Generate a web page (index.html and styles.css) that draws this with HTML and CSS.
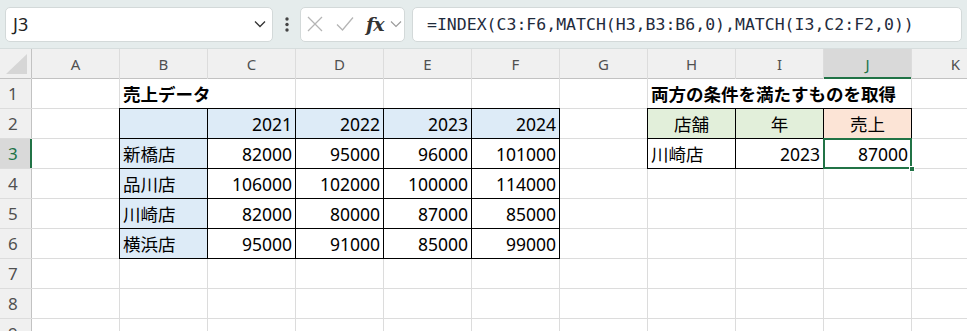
FILE: index.html
```html
<!DOCTYPE html>
<html lang="ja">
<head>
  <meta charset="UTF-8">
  <title>INDEX MATCH</title>
  <link rel="stylesheet" href="styles.css">
</head>
<body>
  <div class="toolbar">
    <div class="namebox">
      <span>J3</span>
      <svg width="12" height="8" viewBox="0 0 12 8"><polyline points="1,1.5 6,6.5 11,1.5" fill="none" stroke="#333" stroke-width="1.3"/></svg>
    </div>
    <div class="dots">
      <svg width="4" height="15" viewBox="0 0 4 15"><circle cx="2" cy="2" r="1.7" fill="#444"/><circle cx="2" cy="7.5" r="1.7" fill="#444"/><circle cx="2" cy="13" r="1.7" fill="#444"/></svg>
    </div>
    <div class="fxbox">
      <svg class="ic-x" width="16" height="16" viewBox="0 0 16 16"><path d="M1 1 L15 15 M15 1 L1 15" stroke="#b5b5b5" stroke-width="1.3" fill="none"/></svg>
      <svg class="ic-ok" width="18" height="16" viewBox="0 0 18 16"><polyline points="1,8.5 6.5,14 17,1.5" stroke="#b5b5b5" stroke-width="1.3" fill="none"/></svg>
      <span class="fx">fx</span>
      <svg class="ic-dd" width="12" height="8" viewBox="0 0 12 8"><polyline points="1,1.5 6,6.5 11,1.5" fill="none" stroke="#999" stroke-width="1.1"/></svg>
    </div>
    <div class="formula">=INDEX(C3:F6,MATCH(H3,B3:B6,0),MATCH(I3,C2:F2,0))</div>
  </div>

  <div class="sheet">
    <!-- column headers -->
    <div class="corner"><svg width="24" height="22" viewBox="0 0 24 22"><polygon points="23,1 23,21 2,21" fill="#d6d6d6"/></svg></div>
    <div class="colhead">A</div>
    <div class="colhead">B</div>
    <div class="colhead">C</div>
    <div class="colhead">D</div>
    <div class="colhead">E</div>
    <div class="colhead">F</div>
    <div class="colhead">G</div>
    <div class="colhead">H</div>
    <div class="colhead">I</div>
    <div class="colhead sel">J</div>
    <div class="colhead">K</div>

    <!-- row 1 -->
    <div class="rowhead">1</div>
    <div class="cell"></div>
    <div class="cell title span2">売上データ</div>
    <div class="cell"></div>
    <div class="cell"></div>
    <div class="cell"></div>
    <div class="cell"></div>
    <div class="cell title span3">両方の条件を満たすものを取得</div>
    <div class="cell"></div>

    <!-- row 2 -->
    <div class="rowhead">2</div>
    <div class="cell"></div>
    <div class="cell bd blue"></div>
    <div class="cell bd blue r">2021</div>
    <div class="cell bd blue r">2022</div>
    <div class="cell bd blue r">2023</div>
    <div class="cell bd blue r">2024</div>
    <div class="cell"></div>
    <div class="cell bd green c">店舗</div>
    <div class="cell bd green c">年</div>
    <div class="cell bd orange c">売上</div>
    <div class="cell"></div>

    <!-- row 3 -->
    <div class="rowhead sel">3</div>
    <div class="cell"></div>
    <div class="cell bd blue">新橋店</div>
    <div class="cell bd r">82000</div>
    <div class="cell bd r">95000</div>
    <div class="cell bd r">96000</div>
    <div class="cell bd r">101000</div>
    <div class="cell"></div>
    <div class="cell bd">川崎店</div>
    <div class="cell bd r">2023</div>
    <div class="cell bd r active">87000<span class="handle"></span></div>
    <div class="cell"></div>

    <!-- row 4 -->
    <div class="rowhead">4</div>
    <div class="cell"></div>
    <div class="cell bd blue">品川店</div>
    <div class="cell bd r">106000</div>
    <div class="cell bd r">102000</div>
    <div class="cell bd r">100000</div>
    <div class="cell bd r">114000</div>
    <div class="cell"></div>
    <div class="cell"></div>
    <div class="cell"></div>
    <div class="cell"></div>
    <div class="cell"></div>

    <!-- row 5 -->
    <div class="rowhead">5</div>
    <div class="cell"></div>
    <div class="cell bd blue">川崎店</div>
    <div class="cell bd r">82000</div>
    <div class="cell bd r">80000</div>
    <div class="cell bd r">87000</div>
    <div class="cell bd r">85000</div>
    <div class="cell"></div>
    <div class="cell"></div>
    <div class="cell"></div>
    <div class="cell"></div>
    <div class="cell"></div>

    <!-- row 6 -->
    <div class="rowhead">6</div>
    <div class="cell"></div>
    <div class="cell bd blue">横浜店</div>
    <div class="cell bd r">95000</div>
    <div class="cell bd r">91000</div>
    <div class="cell bd r">85000</div>
    <div class="cell bd r">99000</div>
    <div class="cell"></div>
    <div class="cell"></div>
    <div class="cell"></div>
    <div class="cell"></div>
    <div class="cell"></div>

    <!-- rows 7-9 -->
    <div class="rowhead">7</div>
    <div class="cell"></div><div class="cell"></div><div class="cell"></div><div class="cell"></div><div class="cell"></div><div class="cell"></div><div class="cell"></div><div class="cell"></div><div class="cell"></div><div class="cell"></div><div class="cell"></div>
    <div class="rowhead">8</div>
    <div class="cell"></div><div class="cell"></div><div class="cell"></div><div class="cell"></div><div class="cell"></div><div class="cell"></div><div class="cell"></div><div class="cell"></div><div class="cell"></div><div class="cell"></div><div class="cell"></div>
    <div class="rowhead">9</div>
    <div class="cell"></div><div class="cell"></div><div class="cell"></div><div class="cell"></div><div class="cell"></div><div class="cell"></div><div class="cell"></div><div class="cell"></div><div class="cell"></div><div class="cell"></div><div class="cell"></div>
  </div>
</body>
</html>
```

FILE: styles.css
```css
/* spreadsheet look */
body {
  margin: 0;
  width: 967px;
  height: 331px;
  overflow: hidden;
  font-family: "Noto Sans", "Noto Sans CJK JP", sans-serif;
  background-color: #fff;
}

/* formula bar */
.toolbar {
  display: flex;
  align-items: center;
  height: 49px;
  box-sizing: border-box;
  padding: 0 5px;
  background-color: #e5ecec;
  border-bottom: 1px solid #d6dddd;
}
.namebox,
.fxbox,
.formula {
  height: 35px;
  box-sizing: border-box;
  background-color: #fff;
  border: 1px solid #d3d9d9;
  border-radius: 5px;
  display: flex;
  align-items: center;
}
.namebox {
  width: 268px;
  justify-content: space-between;
  padding: 0 6px 0 7px;
  font-size: 18px;
  color: #222;
}
.dots {
  width: 27px;
  display: flex;
  justify-content: center;
}
.fxbox {
  width: 105px;
  padding-left: 6px;
}
.ic-ok {
  margin-left: 13px;
}
.fx {
  margin-left: 12px;
  font-family: "DejaVu Serif", serif;
  font-style: italic;
  font-weight: bold;
  font-size: 19px;
  color: #333;
  letter-spacing: -1px;
}
.ic-dd {
  margin-left: 6px;
}
.formula {
  flex: 1;
  margin-left: 7px;
  padding-left: 14px;
  font-family: "DejaVu Sans Mono", monospace;
  font-size: 16.5px;
  color: #1f2b3c;
  white-space: nowrap;
}

/* grid */
.sheet {
  display: grid;
  grid-template-columns: 31px repeat(11, 87px);
  grid-template-rows: 29px;
  grid-auto-rows: 29px;
  gap: 1px;
  background-color: #dcdcdc;
}
.corner,
.colhead,
.rowhead {
  background-color: #f0f0f0;
  color: #505050;
  display: flex;
  align-items: center;
}
.corner {
  justify-content: flex-end;
  align-items: flex-end;
  padding: 0 3px 3px 0;
  box-shadow: 0 1px 0 #c2c2c2, 1px 0 0 #c2c2c2;
}
.colhead {
  justify-content: center;
  font-size: 15px;
  box-shadow: 0 1px 0 #c2c2c2;
}
.rowhead {
  padding-left: 8px;
  font-size: 17px;
  box-shadow: 1px 0 0 #c2c2c2;
}
.colhead.sel {
  background-color: #d9d9d9;
  color: #217346;
  box-shadow: inset 0 -1px 0 #217346, 0 1px 0 #217346;
}
.rowhead.sel {
  background-color: #d9d9d9;
  color: #217346;
  box-shadow: inset -1px 0 0 #217346, 1px 0 0 #217346;
}

.cell {
  display: flex;
  align-items: center;
  padding: 0 3px;
  background-color: #fff;
  color: #000;
  font-size: 17.5px;
  white-space: nowrap;
}
.title {
  font-weight: bold;
}
.span2 {
  grid-column: span 2;
}
.span3 {
  grid-column: span 3;
}
.r {
  justify-content: flex-end;
}
.c {
  justify-content: center;
}
.bd {
  box-shadow: 0 0 0 1px #000;
}
.blue {
  background-color: #ddebf7;
}
.green {
  background-color: #e2efda;
}
.orange {
  background-color: #fce4d6;
}
.active {
  position: relative;
  outline: 2px solid #217346;
  outline-offset: -1px;
}
.handle {
  position: absolute;
  right: -4px;
  bottom: -4px;
  width: 4px;
  height: 4px;
  background-color: #217346;
  border: 1px solid #fff;
}
```
